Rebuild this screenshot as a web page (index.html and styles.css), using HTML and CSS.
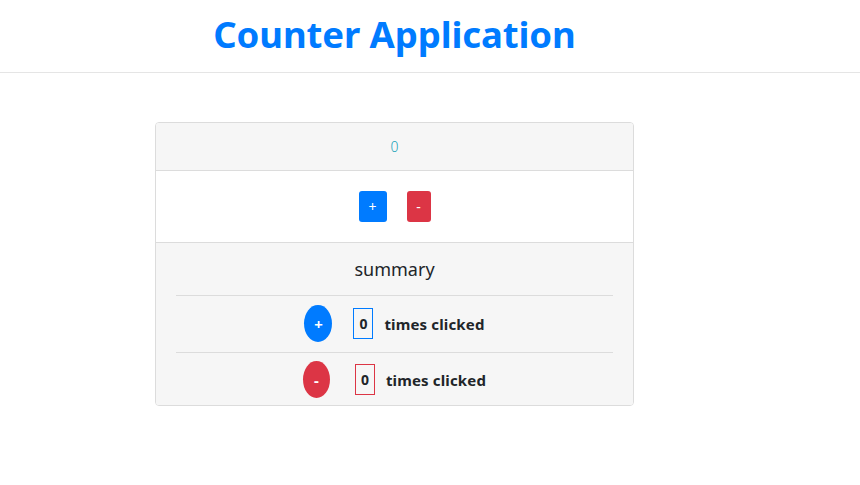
FILE: index.html
```html
<!DOCTYPE html>
<html>
<head>
<meta charset="utf-8">
<link rel="stylesheet" href="styles.css">
</head>
<body>
<header class="header">
  <h1 class="title">Counter Application</h1>
</header>
<main class="page">
  <section class="card">
    <div class="card-top"><span class="count">0</span></div>
    <div class="card-actions">
      <button class="btn btn-blue">+</button>
      <button class="btn btn-red">-</button>
    </div>
    <div class="card-summary">
      <div class="summary-title">summary</div>
      <div class="row row-first">
        <span class="dot dot-blue">+</span>
        <span class="box box-blue">0</span>
        <span class="label">times clicked</span>
      </div>
      <div class="row row-last">
        <span class="dot dot-red">-</span>
        <span class="box box-red">0</span>
        <span class="label">times clicked</span>
      </div>
    </div>
  </section>
</main>
</body>
</html>
```

FILE: styles.css
```css
* { box-sizing: border-box; }
body {
  margin: 0;
  background: #fff;
  font-family: "Noto Sans", "Open Sans", sans-serif;
  color: #212529;
}
.header {
  height: 73px;
  border-bottom: 1px solid #e5e5e5;
  width: 860px;
}
.title {
  margin: 0;
  width: 789px;
  text-align: center;
  color: #007bff;
  font-size: 36.5px;
  font-weight: 700;
  line-height: 68px;
  letter-spacing: -0.1px;
}
.page {
  width: 789px;
  padding-top: 49px;
  display: flex;
  justify-content: center;
}
.card {
  width: 479px;
  border: 1px solid #dcdcdc;
  border-radius: 4px;
  overflow: hidden;
}
.card-top {
  height: 48px;
  background: #f6f6f6;
  border-bottom: 1px solid #dcdcdc;
  display: flex;
  align-items: center;
  justify-content: center;
}
.count {
  color: #17a2b8;
  font-size: 14px;
  font-weight: 300;
}
.card-actions {
  height: 72px;
  border-bottom: 1px solid #dcdcdc;
  display: flex;
  align-items: center;
  justify-content: center;
  gap: 20px;
}
.btn {
  border: none;
  color: #fff;
  font-family: inherit;
  font-size: 14px;
  height: 31px;
  border-radius: 3px;
  padding: 0;
}
.btn-blue { background: #007bff; width: 28px; }
.btn-red { background: #dc3545; width: 24px; }
.card-summary {
  background: #f6f6f6;
  padding: 0 20px;
}
.summary-title {
  height: 53px;
  display: flex;
  align-items: center;
  justify-content: center;
  font-size: 18px;
  border-bottom: 1px solid #dcdcdc;
}
.row {
  display: flex;
  align-items: center;
  justify-content: center;
}
.row-first {
  height: 57px;
  border-bottom: 1px solid #dcdcdc;
  padding-bottom: 1px;
}
.row-last { height: 52px; padding-top: 1px; }
.dot {
  width: 28px;
  height: 37px;
  border-radius: 50%;
  color: #fff;
  font-weight: 700;
  font-size: 15px;
  display: flex;
  align-items: center;
  justify-content: center;
}
.dot-blue { background: #007bff; }
.dot-red { background: #dc3545; width: 27px; }
.box {
  margin-left: 21px;
  width: 20px;
  height: 31px;
  display: flex;
  align-items: center;
  justify-content: center;
  font-weight: 700;
  font-size: 14px;
}
.box-blue { border: 1px solid #007bff; }
.box-red { border: 1px solid #dc3545; margin-left: 25px; }
.label {
  margin-left: 11px;
  font-weight: 700;
  font-size: 15px;
  letter-spacing: 0.15px;
}
```
